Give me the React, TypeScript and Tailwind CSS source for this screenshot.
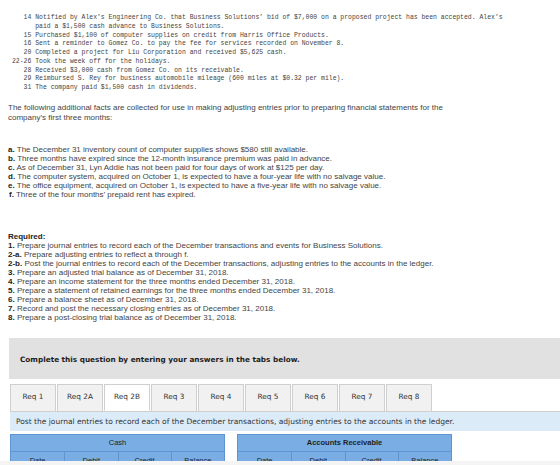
import React from 'react';

const events = [
  '   14 Notified by Alex’s Engineering Co. that Business Solutions’ bid of $7,000 on a proposed project has been accepted. Alex’s',
  '      paid a $1,500 cash advance to Business Solutions.',
  '   15 Purchased $1,100 of computer supplies on credit from Harris Office Products.',
  '   16 Sent a reminder to Gomez Co. to pay the fee for services recorded on November 8.',
  '   20 Completed a project for Liu Corporation and received $5,625 cash.',
  '22-26 Took the week off for the holidays.',
  '   28 Received $3,000 cash from Gomez Co. on its receivable.',
  '   29 Reimbursed S. Rey for business automobile mileage (600 miles at $0.32 per mile).',
  '   31 The company paid $1,500 cash in dividends.',
];

const facts: [string, string][] = [
  ['a.', 'The December 31 inventory count of computer supplies shows $580 still available.'],
  ['b.', 'Three months have expired since the 12-month insurance premium was paid in advance.'],
  ['c.', 'As of December 31, Lyn Addie has not been paid for four days of work at $125 per day.'],
  ['d.', 'The computer system, acquired on October 1, is expected to have a four-year life with no salvage value.'],
  ['e.', 'The office equipment, acquired on October 1, is expected to have a five-year life with no salvage value.'],
  ['f.', 'Three of the four months’ prepaid rent has expired.'],
];

const required: [string, string][] = [
  ['1.', 'Prepare journal entries to record each of the December transactions and events for Business Solutions.'],
  ['2-a.', 'Prepare adjusting entries to reflect a through f.'],
  ['2-b.', 'Post the journal entries to record each of the December transactions, adjusting entries to the accounts in the ledger.'],
  ['3.', 'Prepare an adjusted trial balance as of December 31, 2018.'],
  ['4.', 'Prepare an income statement for the three months ended December 31, 2018.'],
  ['5.', 'Prepare a statement of retained earnings for the three months ended December 31, 2018.'],
  ['6.', 'Prepare a balance sheet as of December 31, 2018.'],
  ['7.', 'Record and post the necessary closing entries as of December 31, 2018.'],
  ['8.', 'Prepare a post-closing trial balance as of December 31, 2018.'],
];

const tabs = ['Req 1', 'Req 2A', 'Req 2B', 'Req 3', 'Req 4', 'Req 5', 'Req 6', 'Req 7', 'Req 8'];

const Ledger: React.FC<{ title: string; bold?: boolean }> = ({ title, bold }) => (
  <div className="w-[215px] border border-[#5f94d2] bg-[#79ade3] text-[#1f1f1f] font-['Liberation_Sans',sans-serif] text-[7.5px]">
    <div className={`h-[17px] flex items-center justify-center border-b border-[#5f94d2] ${bold ? 'font-bold' : ''}`}>
      {title}
    </div>
    <div className="grid grid-cols-4 h-[18px]">
      {['Date', 'Debit', 'Credit', 'Balance'].map((h, i) => (
        <div key={h} className={`flex items-center justify-center ${i > 0 ? 'border-l border-[#5f94d2]' : ''}`}>
          {h}
        </div>
      ))}
    </div>
  </div>
);

export default function App() {
  return (
    <div className="relative w-[560px] h-[465px] overflow-hidden bg-white">
      <div className="pt-[14px] pl-[12px] font-['Liberation_Mono',monospace] text-[6.45px] leading-[8.75px] text-[#444] whitespace-pre">
        {events.map((line, i) => (
          <div key={i}>{line}</div>
        ))}
      </div>

      <div className="px-[8px] font-['Liberation_Sans',sans-serif] text-[8px] text-[#444]">
        <p className="mt-[10px] leading-[10px]">
          The following additional facts are collected for use in making adjusting entries prior to preparing financial statements for the
          <br />
          company’s first three months:
        </p>

        <div className="mt-[22px] leading-[9px]">
          {facts.map(([k, t]) => (
            <div key={k} className={k === 'f.' ? 'pl-[1px]' : ''}>
              <span className="font-bold text-[#222]">{k}</span> {t}
            </div>
          ))}
        </div>

        <div className="mt-[33px] leading-[9px]">
          <div className="font-bold text-[#222]">Required:</div>
          {required.map(([k, t]) => (
            <div key={k}>
              <span className="font-bold text-[#222]">{k}</span> {t}
            </div>
          ))}
        </div>
      </div>

      <div className="mt-[16px] ml-[9px] h-[41px] bg-[#e1e1e1] pl-[11px] pt-[17px] font-['DejaVu_Sans',sans-serif] text-[7.3px] leading-[9px] font-bold text-[#222]">
        Complete this question by entering your answers in the tabs below.
      </div>

      <div className="mt-[5px] ml-[10px] font-['DejaVu_Sans',sans-serif] text-[7.3px] text-[#333]">
        <div className="flex gap-[1px]">
          {tabs.map((t) => (
            <div
              key={t}
              className={`w-[46px] h-[27px] flex items-center justify-center border border-[#cfcfcf] ${
                t === 'Req 2B' ? 'bg-white border-b-white -mb-px relative' : 'bg-[#f1f1f1] border-b-0'
              }`}
            >
              {t}
            </div>
          ))}
        </div>
        <div className="h-[20px] border-t border-[#cfcfcf] bg-[#dcebf8] pl-[6px] flex items-center text-[7.5px]">
          Post the journal entries to record each of the December transactions, adjusting entries to the accounts in the ledger.
        </div>
      </div>

      <div className="mt-[3px] ml-[10px] flex gap-[12px]">
        <Ledger title="Cash" />
        <Ledger title="Accounts Receivable" bold />
      </div>

      <div className="absolute bottom-0 left-0 w-full h-[4px] bg-[#f4f4f4]" />
    </div>
  );
}
